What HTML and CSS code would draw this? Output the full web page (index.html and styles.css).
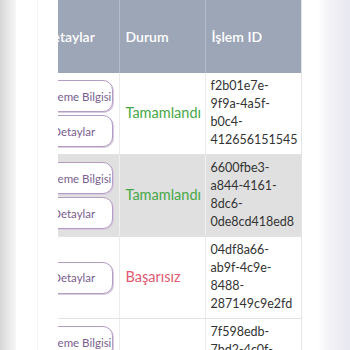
FILE: index.html
```html
<!DOCTYPE html>
<html lang="tr">
<head>
<meta charset="utf-8">
<link rel="stylesheet" href="styles.css">
</head>
<body>
<div class="page">
  <div class="edge-left"></div>
  <div class="gutter-left"><div class="faint-line"></div></div>
  <div class="viewport">
    <table class="grid">
      <thead>
        <tr>
          <th class="c-det">Detaylar</th>
          <th class="c-dur">Durum</th>
          <th class="c-id">İşlem ID</th>
        </tr>
      </thead>
      <tbody>
        <tr>
          <td class="c-det"><div class="btns"><button class="btn">Ödeme Bilgisi</button><button class="btn">Detaylar</button></div></td>
          <td class="c-dur ok">Tamamlandı</td>
          <td class="c-id">f2b01e7e-<br>9f9a-4a5f-<br>b0c4-<br>412656151545</td>
        </tr>
        <tr class="alt">
          <td class="c-det"><div class="btns"><button class="btn">Ödeme Bilgisi</button><button class="btn">Detaylar</button></div></td>
          <td class="c-dur ok">Tamamlandı</td>
          <td class="c-id">6600fbe3-<br>a844-4161-<br>8dc6-<br>0de8cd418ed8</td>
        </tr>
        <tr>
          <td class="c-det"><div class="btns"><button class="btn">Detaylar</button></div></td>
          <td class="c-dur fail">Başarısız</td>
          <td class="c-id">04df8a66-<br>ab9f-4c9e-<br>8488-<br>287149c9e2fd</td>
        </tr>
        <tr>
          <td class="c-det top"><div class="btns"><button class="btn">Ödeme Bilgisi</button><button class="btn">Detaylar</button></div></td>
          <td class="c-dur ok">Tamamlandı</td>
          <td class="c-id top">7f598edb-<br>7bd2-4c0f-<br>9a1e-<br>3c2b8f0d61aa</td>
        </tr>
      </tbody>
    </table>
  </div>
  <div class="gutter-right"></div>
  <div class="edge-right"></div>
</div>
</body>
</html>
```
FILE: styles.css
```css
html, body {
  margin: 0;
  padding: 0;
  background: #ffffff;
  overflow: hidden;
}
.page {
  display: flex;
  width: 350px;
  height: 350px;
  overflow: hidden;
  font-family: Lato, "Noto Sans", sans-serif;
}
.edge-left {
  width: 16px;
  flex: none;
  background: linear-gradient(to right, #d6d6d6, #eeeeee 70%, #f6f6f6);
}
.gutter-left {
  width: 42px;
  flex: none;
  display: flex;
  justify-content: flex-start;
  padding-left: 21px;
  box-sizing: border-box;
}
.faint-line {
  width: 1px;
  background: #f4f4f6;
}
.viewport {
  width: 244px;
  flex: none;
  overflow: hidden;
  border-right: 1px solid #e4e4e8;
  box-sizing: border-box;
  align-self: stretch;
}
.grid {
  border-collapse: collapse;
  margin-left: -29px;
  table-layout: fixed;
  width: 272px;
}
.grid th {
  background: #9ca6b7;
  color: #ffffff;
  font-weight: 600;
  font-size: 14px;
  text-align: left;
  height: 73px;
  padding: 0 6px;
  box-sizing: border-box;
  border-right: 1px solid #b4bcc9;
}
.grid td {
  border-right: 1px solid #ececec;
  border-bottom: 1px solid #e2e2e2;
  padding: 4px 6px 5px;
  font-size: 12.5px;
  line-height: 18px;
  color: #333333;
  vertical-align: middle;
}
.grid .c-det { width: 90px; }
.grid .c-dur { width: 86px; }
.grid .c-id { width: 96px; }
.grid th.c-det { padding-left: 13px; }
.grid td.c-det { padding: 7px 6px 7px 6px; }
.grid td.c-id { padding-left: 5px; }
.grid td.top { vertical-align: top; }
.alt td { background: #e0e0e0; }
.alt td.c-det, .alt td.c-dur { border-right-color: #f0f0f0; }
.ok { color: #45a845 !important; font-size: 14.5px !important; }
.fail { color: #df5a72 !important; font-size: 14.5px !important; }
.btns {
  display: flex;
  flex-direction: column;
  gap: 3px;
}
.btn {
  height: 32px;
  border: 1px solid #b59cc4;
  border-radius: 10px;
  background: #ffffff;
  color: #7a5e90;
  font-family: Lato, "Noto Sans", sans-serif;
  font-size: 11.5px;
  padding: 0 6px;
  white-space: nowrap;
  box-shadow: 1px 1px 0 #d9cce0;
}
.gutter-right {
  width: 16px;
  flex: none;
}
.edge-right {
  flex: 1;
  background: linear-gradient(to right, #ffffff, #f1f1f6 40%, #e8e8f0);
}
```
